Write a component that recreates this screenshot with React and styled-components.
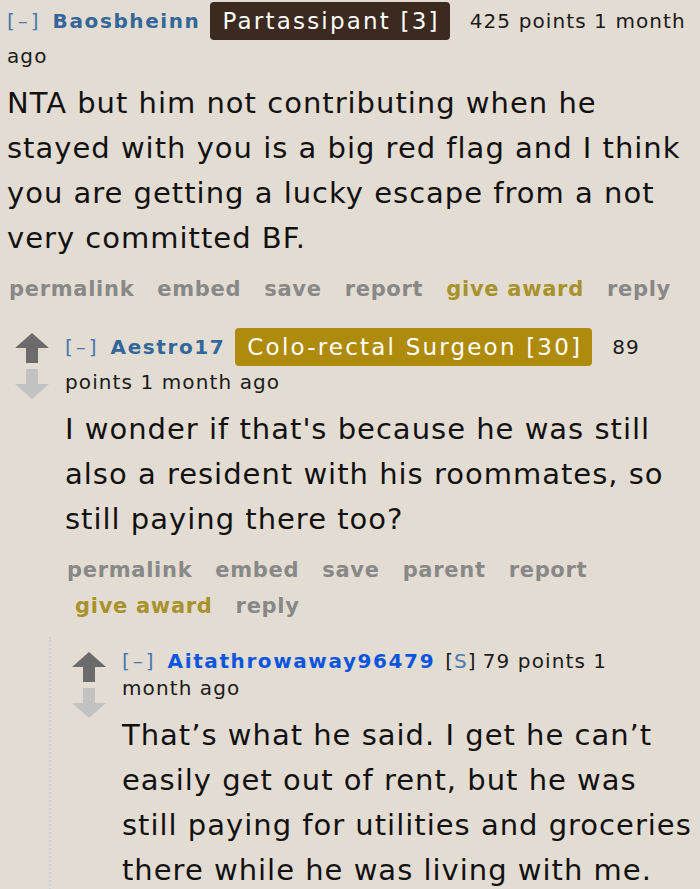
import React from 'react';
import styled, { createGlobalStyle } from 'styled-components';

const GlobalStyle = createGlobalStyle`
  body {
    margin: 0;
    background: #e3dcd2;
    font-family: "DejaVu Sans", Verdana, sans-serif;
    color: #111;
  }
`;

const Page = styled.div`
  padding: 2px 7px 0 7px;
  overflow: hidden;
  height: 889px;
  box-sizing: border-box;
`;

const CommentWrapper = styled.div`
  display: flex;
  margin-top: ${(p) => p.top || 0}px;
  margin-left: ${(p) => p.indent || 0}px;
  padding-left: ${(p) => p.pad || 0}px;
  padding-top: ${(p) => p.padTop || 0}px;
  border-left: ${(p) => (p.dotted ? '2px dotted #cbd0dc' : 'none')};
`;

const Arrows = styled.div`
  display: flex;
  flex-direction: column;
  align-items: center;
  gap: 6px;
  width: 34px;
  flex-shrink: 0;
  padding-top: ${(p) => p.offset}px;
  margin-right: 16px;
`;

const Entry = styled.div`
  flex: 1;
  min-width: 0;
`;

const Tagline = styled.div`
  font-size: 20px;
  line-height: 27px;
  letter-spacing: 1.1px;
  color: #1a1a1a;
  max-width: ${(p) => (p.maxWidth ? `${p.maxWidth}px` : 'none')};
`;

const Expand = styled.span`
  color: #4a78b0;
  letter-spacing: 3px;
  margin-right: 11px;
`;

const Author = styled.span`
  font-weight: bold;
  letter-spacing: 1.6px;
  color: ${(p) => (p.op ? '#0a55df' : '#336699')};
  margin-right: 10px;
`;

const Flair = styled.span`
  display: inline-block;
  vertical-align: middle;
  font-size: 23px;
  letter-spacing: 2.2px;
  line-height: 34px;
  padding: 2px 10px 2px 12px;
  border-radius: 4px;
  margin: 0 20px 3px 0;
  color: #fff;
  background: ${(p) => p.bg};
`;

const Submitter = styled.span`
  margin-right: 6px;
  & b {
    color: #4a78b0;
    font-weight: normal;
  }
`;

const Body = styled.p`
  margin: 11px 0 0;
  font-size: 29px;
  line-height: 45px;
  letter-spacing: 1px;
`;

const Actions = styled.ul`
  list-style: none;
  margin: 10px 0 0 2px;
  padding: 0;
  display: flex;
  flex-wrap: wrap;
  font-size: 21px;
  line-height: 36px;
  font-weight: bold;
  letter-spacing: 0.7px;
  column-gap: 23px;
`;

const Action = styled.li`
  color: ${(p) => (p.award ? '#a8922c' : '#888888')};
  margin-left: ${(p) => (p.shift ? 8 : 0)}px;
`;

function Arrow({ down }) {
  return (
    <svg width="34" height="30" viewBox="0 0 34 30">
      <path
        d={down ? 'M11 0 H23 V15 H34 L17 30 L0 15 H11 Z' : 'M17 0 L34 15 H23 V30 H11 V15 H0 Z'}
        fill={down ? '#c2c2c2' : '#6b6b6b'}
      />
    </svg>
  );
}

function Comment({
  author, op, flair, flairBg, score, body, actions, arrows, arrowOffset, wrapShift, tagWidth, ...rest
}) {
  return (
    <CommentWrapper {...rest}>
      {arrows && (
        <Arrows offset={arrowOffset}>
          <Arrow />
          <Arrow down />
        </Arrows>
      )}
      <Entry>
        <Tagline maxWidth={tagWidth}>
          <Expand>[–]</Expand>
          <Author op={op}>{author}</Author>
          {flair && <Flair bg={flairBg}>{flair}</Flair>}
          {op && <Submitter>[<b>S</b>]</Submitter>}
          {score}
        </Tagline>
        <Body>{body}</Body>
        {actions && (
          <Actions>
            {actions.map((a) => (
              <Action key={a} award={a === 'give award'} shift={wrapShift && a === 'give award'}>
                {a}
              </Action>
            ))}
          </Actions>
        )}
      </Entry>
    </CommentWrapper>
  );
}

export default function App() {
  return (
    <Page>
      <GlobalStyle />
      <Comment
        author="Baosbheinn"
        flair="Partassipant [3]"
        flairBg="#3c2a20"
        score="425 points 1 month ago"
        body="NTA but him not contributing when he stayed with you is a big red flag and I think you are getting a lucky escape from a not very committed BF."
        actions={['permalink', 'embed', 'save', 'report', 'give award', 'reply']}
      />
      <Comment
        indent={8}
        top={21}
        arrows
        arrowOffset={5}
        wrapShift
        author="Aestro17"
        flair="Colo-rectal Surgeon [30]"
        flairBg="#af8b0d"
        score="89 points 1 month ago"
        body="I wonder if that's because he was still also a resident with his roommates, so still paying there too?"
        actions={['permalink', 'embed', 'save', 'parent', 'report', 'give award', 'reply']}
      />
      <Comment
        indent={42}
        top={13}
        padTop={11}
        pad={21}
        dotted
        arrows
        arrowOffset={4}
        op
        tagWidth={520}
        author="Aitathrowaway96479"
        score="79 points 1 month ago"
        body="That’s what he said. I get he can’t easily get out of rent, but he was still paying for utilities and groceries there while he was living with me."
      />
    </Page>
  );
}
